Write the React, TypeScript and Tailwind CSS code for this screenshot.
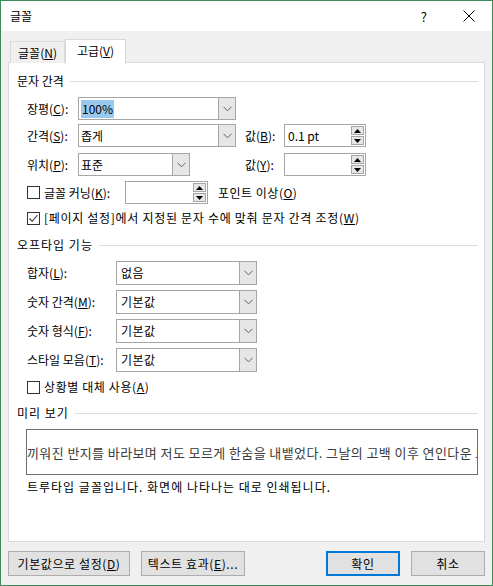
import type { ReactNode } from "react";

const FONT = { fontFamily: '"Noto Sans CJK KR", "Noto Sans", sans-serif' };

// drop-down chevron used by every combo box
const Chevron = () => (
  <svg width="9" height="6" viewBox="0 0 9 6" className="block">
    <path d="M0.5 0.8 L4.5 4.8 L8.5 0.8" fill="none" stroke="#606060" strokeWidth="1" />
  </svg>
);

const Combo = ({ width, children }: { width: string; children?: ReactNode }) => (
  <div className={`flex h-full ${width} border border-[#a6a6a6] bg-white`}>
    <div className="flex flex-1 items-center pl-[2px] text-[12px] leading-none text-black">{children}</div>
    <div className="flex w-[17px] items-center justify-center border-l border-[#a6a6a6] bg-[#e6e6e6] outline outline-1 -outline-offset-2 outline-[#e6e6e6]">
      <Chevron />
    </div>
  </div>
);

const Arrow = ({ up }: { up?: boolean }) => (
  <svg width="7" height="4" viewBox="0 0 7 4" className="block">
    <path d={up ? "M0 4 L3.5 0 L7 4 Z" : "M0 0 L3.5 4 L7 0 Z"} fill="#000" />
  </svg>
);

const Spin = ({ width, value }: { width: string; value?: string }) => (
  <div className={`flex h-full ${width} border border-[#a6a6a6] bg-white`}>
    <div className="flex flex-1 items-center pl-[3px] text-[12px] leading-none">{value}</div>
    <div className="flex w-[15px] flex-col p-px gap-px">
      <div className="flex flex-1 items-center justify-center border border-[#a6a6a6] bg-[#e6e6e6]">
        <Arrow up />
      </div>
      <div className="flex flex-1 items-center justify-center border border-[#a6a6a6] bg-[#e6e6e6]">
        <Arrow />
      </div>
    </div>
  </div>
);

const Check = ({ checked }: { checked?: boolean }) => (
  <div className="flex h-[13px] w-[13px] shrink-0 items-center justify-center border border-[#333] bg-white">
    {checked && (
      <svg width="11" height="11" viewBox="0 0 11 11">
        <path d="M1.5 5.5 L4.2 8.3 L9.5 2" fill="none" stroke="#333" strokeWidth="1.1" />
      </svg>
    )}
  </div>
);

const Header = ({ title, className, track = "" }: { title: string; className: string; track?: string }) => (
  <div className={`flex h-[16px] items-center pl-[8px] pr-[6px] ${className}`}>
    <span className={`text-[12px] leading-none ${track}`}>{title}</span>
    <div className="ml-[6px] h-px flex-1 bg-[#dcdcdc]" />
  </div>
);

const Label = ({ text, k, tail, width }: { text: string; k: string; tail?: string; width: string }) => (
  <span className={`${width} shrink-0 text-[12px] leading-none`}>
    {text}(<u>{k}</u>){tail ?? ":"}
  </span>
);

const Button = ({ children, width, primary }: { children: ReactNode; width: string; primary?: boolean }) => (
  <div
    className={`flex h-[25px] ${width} items-center justify-center bg-[#e1e1e1] text-[12px] leading-none tracking-[0.6px] ${
      primary ? "border-2 border-[#0078d7]" : "border border-[#adadad]"
    }`}
  >
    {children}
  </div>
);

export default function App() {
  return (
    <div style={FONT} className="flex h-[586px] w-[493px] flex-col border border-[#3c8c5c] bg-[#f0f0f0] text-black">
      {/* title bar */}
      <div className="flex h-[30px] shrink-0 items-center bg-white">
        <span className="ml-[9px] text-[12px] leading-none">글꼴</span>
        <span className="ml-auto text-[13px] leading-none">?</span>
        <svg width="12" height="12" viewBox="0 0 12 12" className="ml-[36px] mr-[17px]">
          <path d="M0.5 0.5 L11.5 11.5 M11.5 0.5 L0.5 11.5" stroke="#000" strokeWidth="1" />
        </svg>
      </div>

      <div className="flex flex-1 flex-col px-[7px]">
        {/* tabs */}
        <div className="relative z-10 mt-[8px] flex h-[24px] items-end pl-[2px]">
          <div className="flex h-[22px] w-[55px] items-center justify-center border border-b-0 border-[#d9d9d9] bg-[#f0f0f0] text-[12px] leading-none">
            글꼴(<u>N</u>)
          </div>
          <div className="-mb-px flex h-[25px] w-[61px] items-center justify-center border border-b-0 border-[#d9d9d9] bg-white pb-[2px] text-[12px] leading-none">
            고급(<u>V</u>)
          </div>
        </div>

        {/* panel */}
        <div className="-mt-px flex h-[480px] flex-col border border-[#d9d9d9] bg-white">
          <Header title="문자 간격" className="mt-[10px]" />

          <div className="mt-[8px] flex h-[23px] items-center pl-[18px]">
            <Label text="장평" k="C" width="w-[51px]" />
            <Combo width="w-[158px]">
              <span className="bg-[#99c9ef] px-px py-[3px]">100%</span>
            </Combo>
          </div>

          <div className="mt-[4px] flex h-[23px] items-center pl-[18px]">
            <Label text="간격" k="S" width="w-[51px]" />
            <Combo width="w-[158px]">좁게</Combo>
            <Label text="값" k="B" width="ml-[9px] w-[39px]" />
            <Spin width="w-[82px]" value="0.1 pt" />
          </div>

          <div className="mt-[6px] flex h-[23px] items-center pl-[18px]">
            <Label text="위치" k="P" width="w-[51px]" />
            <Combo width="w-[112px]">표준</Combo>
            <Label text="값" k="Y" width="ml-[55px] w-[39px]" />
            <Spin width="w-[82px]" />
          </div>

          <div className="mt-[5px] flex h-[23px] items-center pl-[18px]">
            <Check />
            <Label text="글꼴 커닝" k="K" width="ml-[4px] w-[81px]" />
            <Spin width="w-[83px]" />
            <span className="ml-[10px] text-[12px] leading-none tracking-[0.5px]">
              포인트 이상(<u>O</u>)
            </span>
          </div>

          <div className="mt-[6px] flex h-[16px] items-center pl-[18px]">
            <Check checked />
            <span className="ml-[4px] text-[12px] leading-none tracking-[0.7px]">
              [페이지 설정]에서 지정된 문자 수에 맞춰 문자 간격 조정(<u>W</u>)
            </span>
          </div>

          <Header title="오프타입 기능" className="mt-[11px]" track="tracking-[1px]" />

          {[
            { text: "합자", k: "L", value: "없음", mt: "mt-[8px]" },
            { text: "숫자 간격", k: "M", value: "기본값", mt: "mt-[5px]" },
            { text: "숫자 형식", k: "F", value: "기본값", mt: "mt-[5px]" },
            { text: "스타일 모음", k: "T", value: "기본값", mt: "mt-[5px]" },
          ].map((r) => (
            <div key={r.text} className={`${r.mt} flex h-[24px] items-center pl-[18px]`}>
              <Label text={r.text} k={r.k} width="w-[89px]" />
              <Combo width="w-[141px]">
                <span className="pl-[2px] tracking-[0.5px]">{r.value}</span>
              </Combo>
            </div>
          ))}

          <div className="mt-[7px] flex h-[16px] items-center pl-[18px]">
            <Check />
            <span className="ml-[4px] text-[12px] leading-none tracking-[0.6px]">
              상황별 대체 사용(<u>A</u>)
            </span>
          </div>

          <Header title="미리 보기" className="mt-[10px]" track="tracking-[1px]" />

          <div className="ml-[17px] mt-[8px] flex h-[46px] w-[452px] items-center overflow-hidden border border-[#6e6e6e]">
            <span className="whitespace-nowrap text-[13px] leading-none tracking-[0.4px] text-[#3a3a3a]">
              끼워진 반지를 바라보며 저도 모르게 한숨을 내뱉었다. 그날의 고백 이후 연인다운 모습을
            </span>
          </div>

          <div className="ml-[18px] mt-[4px] flex h-[16px] items-center text-[12px] leading-none tracking-[1px]">
            트루타입 글꼴입니다. 화면에 나타나는 대로 인쇄됩니다.
          </div>
        </div>

        {/* buttons */}
        <div className="mt-[9px] flex">
          <Button width="w-[122px]">
            기본값으로 설정(<u>D</u>)
          </Button>
          <Button width="ml-[11px] w-[104px]">
            텍스트 효과(<u>E</u>)...
          </Button>
          <Button width="ml-auto w-[74px]" primary>
            확인
          </Button>
          <Button width="ml-[11px] w-[74px]">취소</Button>
        </div>
      </div>
    </div>
  );
}
